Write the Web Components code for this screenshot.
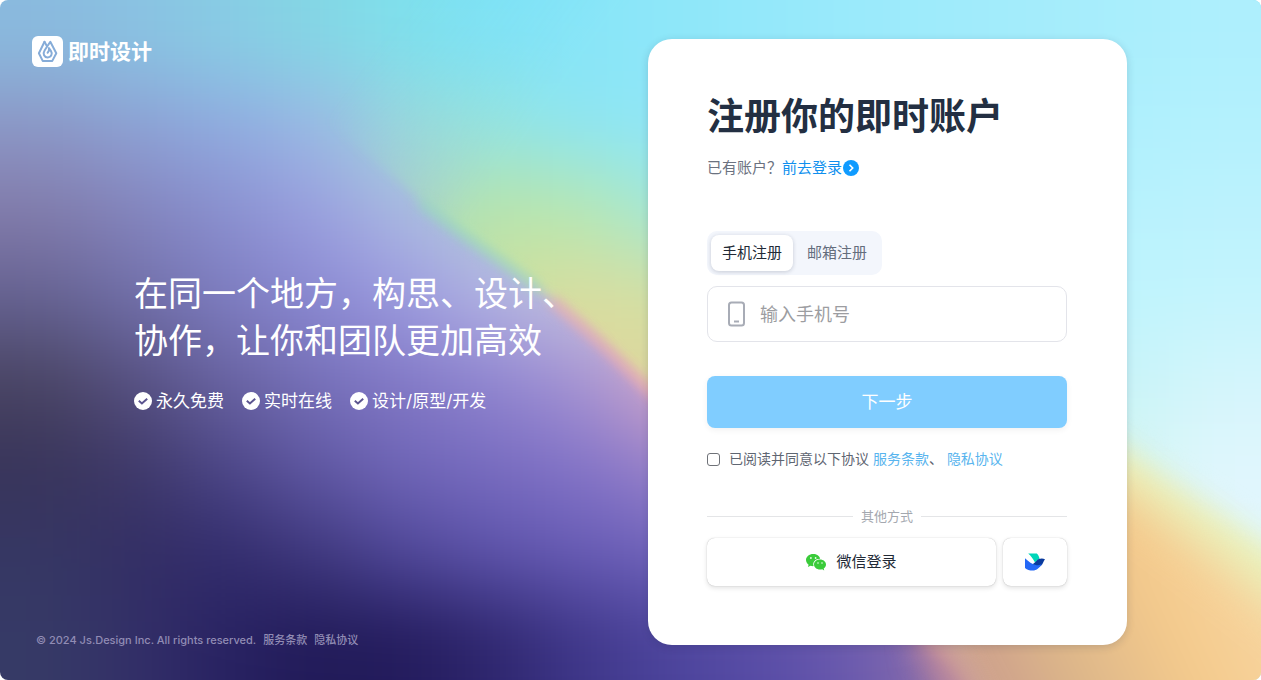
<!DOCTYPE html>
<html lang="zh-CN">
<head>
<meta charset="utf-8">
<meta name="viewport" content="width=device-width, initial-scale=1">
<title>注册 - 即时设计</title>
<style>
  body {
    margin: 0;
    background: #fff;
    font-family: Inter, "Noto Sans CJK SC", sans-serif;
    color: #1f2a3c;
  }
</style>
</head>
<body>
<register-page></register-page>

<template id="page-tpl">
  <style>
    :host {
      display: block;
      position: relative;
      min-height: 100vh;
      border-radius: 8px;
      overflow: hidden;
    }
    color-backdrop { position: absolute; inset: 0; }
    .layout {
      position: relative;
      box-sizing: border-box;
      min-height: 100vh;
      padding: 36px 134px 32px 0;
      display: grid;
      grid-template-columns: minmax(0, 1fr) 479px;
    }
    .intro { display: flex; flex-direction: column; justify-content: space-between; }
    brand-logo { margin-left: 32px; }
    hero-copy { margin: 0 0 16px 134px; }
    site-footer { margin-left: 36px; }
    register-card { margin: 3px 0; }
  </style>
  <color-backdrop></color-backdrop>
  <div class="layout">
    <div class="intro">
      <brand-logo>即时设计</brand-logo>
      <hero-copy>
        <span slot="title">在同一个地方，构思、设计、<br>协作，让你和团队更加高效</span>
        <feature-item>永久免费</feature-item>
        <feature-item>实时在线</feature-item>
        <feature-item>设计/原型/开发</feature-item>
      </hero-copy>
      <site-footer></site-footer>
    </div>
    <register-card></register-card>
  </div>
</template>

<template id="brand-tpl">
  <style>
    :host { display: flex; align-items: center; gap: 5px; height: 31px; color: #fff; font-size: 21px; line-height: 31px; font-weight: 700; }
    svg { display: block; }
  </style>
  <svg width="31" height="31" viewBox="0 0 31 31" aria-hidden="true">
    <rect width="31" height="31" rx="6" fill="#fff"/>
    <g fill="none" stroke="#86acd8" stroke-width="2" stroke-linejoin="round" stroke-linecap="round">
      <path d="M12.500 5.800 6.900 17.200l3.800 7.700h9.600l4-7.700L18.300 5.800l-5.600 8.400c-2.400 3.800-.3 7.200 3 7.200 3.600 0 5-3.800 3.300-6.300l-2.100-3c.7 2.500-.2 3.600-1.300 4.700"/>
      <path d="m12.500 5.800 2.200 4"/>
    </g>
  </svg>
  <slot></slot>
</template>

<template id="hero-tpl">
  <style>
    :host { display: block; color: #fff; }
    h1 { margin: 0; font-size: 34px; line-height: 47px; font-weight: 400; white-space: nowrap; }
    .features { display: flex; gap: 18px; margin-top: 25px; }
  </style>
  <h1><slot name="title"></slot></h1>
  <div class="features"><slot></slot></div>
</template>

<template id="feature-tpl">
  <style>
    :host { display: flex; align-items: center; gap: 4px; font-size: 17px; line-height: 24px; white-space: nowrap; }
    svg { display: block; }
  </style>
  <svg width="18" height="18" viewBox="0 0 18 18" aria-hidden="true">
    <circle cx="9" cy="9" r="9" fill="#fff"/>
    <path d="m4.800 8.800 3.100 2.700 5.300-4.800" fill="none" stroke="#5c5590" stroke-width="2"/>
  </svg>
  <span><slot></slot></span>
</template>

<template id="footer-tpl">
  <style>
    :host { display: flex; gap: 7px; font-size: 11px; line-height: 16px; font-weight: 500; color: #918cb4; white-space: nowrap; }
    a { color: inherit; text-decoration: none; }
  </style>
  <span>© 2024 Js.Design Inc. All rights reserved.</span>
  <a href="#terms">服务条款</a>
  <a href="#privacy">隐私协议</a>
</template>

<template id="card-tpl">
  <style>
    :host {
      display: block;
      box-sizing: border-box;
      padding: 54px 60px 59px 59px;
      border-radius: 24px;
      background: #fff;
      box-shadow: 0 2px 8px rgba(20, 30, 60, .16);
    }
    h2 { margin: 0; font-size: 37px; line-height: 48px; font-weight: 700; color: #232f42; }
    .login { margin: 16px 0 52px; display: flex; align-items: center; font-size: 15px; line-height: 22px; color: #6b7280; }
    a { text-decoration: none; }
    .login a { display: flex; align-items: center; color: #0f8fee; }
    phone-field { margin-top: 11px; }
    .next {
      display: block; width: 100%; height: 52px; margin: 34px 0 21px; padding: 0;
      border: 0; border-radius: 8px; background: #80cdff; color: #fff;
      font: 400 17px/24px Inter, "Noto Sans CJK SC", sans-serif;
      box-shadow: 0 2px 6px rgba(0, 0, 0, .06);
    }
    .agree { display: flex; align-items: center; font-size: 14px; line-height: 20px; color: #5f6672; }
    .agree input {
      appearance: none; box-sizing: border-box; width: 13px; height: 13px; margin: 0 9px 0 0;
      border: 1px solid #6f7278; border-radius: 3px; background: #fff;
    }
    .agree input:checked { background: #0f9bff; }
    .agree a { color: #58b4ee; }
    .or { display: flex; align-items: center; gap: 8px; margin: 37px 0 12px; font-size: 13px; line-height: 20px; color: #a4a8af; }
    .or::before, .or::after { content: ""; flex: 1; height: 1px; background: #e4e5e7; }
    .social { display: grid; grid-template-columns: 1fr 64px; gap: 7px; }
  </style>
  <h2>注册你的即时账户</h2>
  <div class="login"><span>已有账户？</span><a href="#login">前去登录
    <svg width="18" height="18" viewBox="0 0 18 18" aria-hidden="true"><circle cx="9" cy="9" r="8" fill="#0f9bff"/><path d="m7.500 5.800 3.200 3.200-3.200 3.200" fill="none" stroke="#fff" stroke-width="1.600"/></svg></a></div>
  <mode-tabs></mode-tabs>
  <phone-field></phone-field>
  <button class="next" type="button">下一步</button>
  <div class="agree">
    <input id="agree" type="checkbox">
    <span><label for="agree">已阅读并同意以下协议</label> <a href="#terms">服务条款</a>、 <a href="#privacy">隐私协议</a></span>
  </div>
  <div class="or">其他方式</div>
  <div class="social">
    <social-button>
      <svg slot="icon" width="20" height="18" viewBox="0 0 20 18" aria-hidden="true">
        <g fill="#3acb3a">
          <path d="M7.200 1C3.200 1 0 3.700 0 7.100c0 1.900 1 3.500 2.600 4.700l-.7 2.200 2.600-1.300c1 .3 2 .5 3.100.4-1.400-4.200 2-7.500 6.600-7.300C13.600 2.900 10.600 1 7.200 1z"/>
          <path d="M14 6.600c-3.400 0-6 2.200-6 5s2.600 5 6 5c.8 0 1.500-.1 2.200-.3l2 1.100-.5-1.800c1.400-.9 2.300-2.300 2.300-4 0-2.800-2.700-5-6-5z"/>
        </g>
        <g fill="#e9ffe9"><circle cx="4.900" cy="5" r=".9"/><circle cx="9.600" cy="5" r=".9"/><circle cx="12" cy="10" r=".8"/><circle cx="16" cy="10" r=".8"/></g>
      </svg>微信登录</social-button>
    <social-button label="飞书登录">
      <svg slot="icon" width="20" height="18" viewBox="0 0 20 18" aria-hidden="true">
        <path d="M3.200 .6h8.600c1.400 1.200 2.300 3 2.800 5.300-1.900.6-3.300 2-4.600 3.600C8.200 6 6.200 3.400 3.200 .6z" fill="#00d6b9"/>
        <path d="M20 6.300c-3-1.400-6.200-.8-8.700 1.600-1.600 1.700-3 3.200-5 3.800 3.200 1.900 7 3.100 10 .8 1.600-1.300 2.200-4.500 3.700-6.200z" fill="#0a3a9c"/>
        <path d="M0 5.200c3.300 3.300 7.300 6.100 11.700 7 2.400.4 4-.2 5.300-1.600-2 4.300-5.400 7-9.400 7-3 0-5.600-.8-7.300-2.300-.3-.3-.3-.4-.3-.8z" fill="#2468f6"/>
      </svg></social-button>
  </div>
</template>

<template id="tabs-tpl">
  <style>
    :host { display: block; }
    .track { display: inline-flex; gap: 3px; padding: 4px; border-radius: 10px; background: #f3f6fc; vertical-align: top; }
    button {
      width: 82px; height: 36px; padding: 0; border: 0; border-radius: 8px; background: none; color: #646d7c;
      font: 400 15px/22px Inter, "Noto Sans CJK SC", sans-serif;
    }
    button[aria-selected="true"] { background: #fff; color: #222a36; box-shadow: 0 1px 4px rgba(20, 30, 60, .2); }
  </style>
  <div class="track" role="tablist">
    <button type="button" role="tab" aria-selected="true">手机注册</button>
    <button type="button" role="tab" aria-selected="false">邮箱注册</button>
  </div>
</template>

<template id="phone-tpl">
  <style>
    :host { display: block; }
    .box { display: flex; align-items: center; gap: 14px; height: 54px; padding: 0 20px; border: 1px solid #e3e4ea; border-radius: 10px; background: #fff; }
    label, svg { display: block; }
    input {
      flex: 1; min-width: 0; height: 40px; padding: 0; border: 0; outline: 0; background: none; color: #222a36;
      font: 400 18px/26px Inter, "Noto Sans CJK SC", sans-serif;
    }
    input::placeholder { color: #9c9da1; opacity: 1; }
  </style>
  <div class="box">
    <label for="phone" aria-label="手机号">
      <svg width="18" height="26" viewBox="0 0 18 26" fill="none" stroke="#a8acb6" stroke-width="2" aria-hidden="true"><rect x="1" y="1.500" width="15" height="23" rx="2.500"/><path d="M6 20.500h5"/></svg>
    </label>
    <input id="phone" type="tel" placeholder="输入手机号">
  </div>
</template>

<template id="social-tpl">
  <style>
    :host { display: block; }
    button {
      display: flex; align-items: center; justify-content: center; gap: 10px;
      box-sizing: border-box; width: 100%; height: 48px; padding: 0;
      border: 0; border-radius: 8px; background: #fff; color: #222a36;
      font: 400 15px/22px Inter, "Noto Sans CJK SC", sans-serif;
      box-shadow: 0 0 1px rgba(0, 0, 0, .3), 0 2px 5px rgba(0, 0, 0, .12);
    }
  </style>
  <button type="button"><slot name="icon"></slot><slot></slot></button>
</template>

<script>
  const stamp = (el, id) => {
    const root = el.attachShadow({ mode: "open" });
    root.append(document.getElementById(id).content.cloneNode(true));
    return root;
  };

  /* Colour fields, one entry per 90 x 85 cell; a row's last colour runs on to the right. */
  const DUSK = [
    "8abade 8ac2e2 88cce4 84d6e4 7fe0ec 7fe2f4",
    "8c96c6 8ea0d4 90aae0 9cb8e4 9cd4dc 98dcd8",
    "827baa 8383bc 8a8fcf 9a9fdf acb8e2 b0c8d8",
    "656292 706ea8 7d7cc0 8a88d2 9c9be0 b4b4e4 c4c0dc",
    "494462 565080 6862a0 7670b8 8278c6 9085d0 a694d4 d8a8c4",
    "38345a 3e3868 4c4688 6058a4 7066b8 786cc0 8474c8 9a84cc b48ccc",
    "363764 332e64 322c6c 3f387e 50489a 5e54ac 685cb6 7064bc 8070c0 9078c0",
    "363a66 332f68 282262 211a58 231b5c 2e266e 3f378a 4c449c 584ca6 6a5aae 8e70ac c08898"
  ];
  const DAWN = [
    "8abade 8ac2e2 86cee4 82dae4 7ae0f2 80e3f8 88e5f8 8ee7f9 94e8fa 9aeafb 9febfb a4ecfb a9eefc aeeffd",
    "8c96c4 8c9cd0 8fa5dc 98d0dc 98e0d4 94e4e0 8ee5f2 8fe7f8 96e9fa 9ceafb a2ecfb a8eefc aff0fd b4f1fd",
    "8c96c4 8c9cd0 8fa5dc a0c8d0 a8d8bc bae4a8 b8e8b0 a0e8dc 9ceafa a0ecfb a8eefc b0f0fd b8f2fd bcf2fd",
    "a0c8d0 a0c8d0 a0c8d0 a0c8d0 a8dcb8 cce0a0 dcdc9e d4e0a0 c0e8c0 b0ecf0 b4f0fc b8f2fd c0f4fd c4f4fd",
    "c8d0b0 c8d0b0 c8d0b0 c8d0b0 c8d0b0 d4d8a0 dcd69c dcd8a0 d8e0a8 d0e8c0 c8f0e0 c4f4f4 c8f4f8 d4f5fb",
    "dcc0a0 dcc0a0 dcc0a0 dcc0a0 dcc0a0 dcc0a0 dcc0a0 e8c0a0 e8c8a0 e8d0a0 e0e0b0 d4f2e0 d4f6f2 e0f6fd",
    "d0a098 d0a098 d0a098 d0a098 d0a098 d0a098 d0a098 d0a098 dcb098 e8c0a0 ecd0a0 e8e8c0 dff6f0 e2f7fc",
    "c89890 c89890 c89890 c89890 c89890 c89890 c89890 c89890 c89890 c89890 c89890 dcb490 e8e8c0 e4f6f0"
  ];
  const field = rows => rows.map((row, r) => {
    const colours = row.split(" ");
    let out = "";
    for (let c = -1; c < 15; c++) {
      const fill = colours[Math.max(0, Math.min(c, colours.length - 1))];
      const left = c < 0 ? -200 : c * 90;
      const right = c === 14 ? 1480 : c * 90 + 91;
      const top = r === 0 ? -140 : r * 85;
      const bottom = r === 7 ? 820 : r * 85 + 86;
      out += `<rect x="${left}" y="${top}" width="${right - left}" height="${bottom - top}" fill="#${fill}"/>`;
    }
    return out;
  }).join("");

  customElements.define("color-backdrop", class extends HTMLElement {
    constructor() {
      super();
      this.attachShadow({ mode: "open" }).innerHTML = `
        <style>:host { display: block; } svg { display: block; width: 100%; height: 100%; }</style>
        <svg viewBox="0 0 1261 680" preserveAspectRatio="none" aria-hidden="true">
          <defs>
            <filter id="wide" filterUnits="userSpaceOnUse" x="-150" y="-150" width="1600" height="1000" color-interpolation-filters="sRGB"><feGaussianBlur stdDeviation="40"/></filter>
            <filter id="mid" filterUnits="userSpaceOnUse" x="-150" y="-150" width="1600" height="1000" color-interpolation-filters="sRGB"><feGaussianBlur stdDeviation="14"/></filter>
            <filter id="soft" filterUnits="userSpaceOnUse" x="-150" y="-150" width="1600" height="1000" color-interpolation-filters="sRGB"><feGaussianBlur stdDeviation="22"/></filter>
            <filter id="fine" filterUnits="userSpaceOnUse" x="-150" y="-150" width="1600" height="1000" color-interpolation-filters="sRGB"><feGaussianBlur stdDeviation="6"/></filter>
            <linearGradient id="reach" gradientUnits="userSpaceOnUse" x1="340" y1="100" x2="480" y2="200"><stop offset="0" stop-color="#000"/><stop offset="1" stop-color="#fff"/></linearGradient>
            <linearGradient id="peach" gradientUnits="userSpaceOnUse" x1="960" y1="690" x2="1240" y2="560"><stop offset="0" stop-color="#c8988c"/><stop offset=".35" stop-color="#dcb68a"/><stop offset=".7" stop-color="#f4ca8c"/><stop offset="1" stop-color="#f7d49e"/></linearGradient>
            <mask id="edge" maskUnits="userSpaceOnUse" x="0" y="0" width="1261" height="680">
              <path filter="url(#fine)" fill="url(#reach)" d="M200-60 290 90 Q350 140 400 182 C445 226 500 256 550 298 S610 350 655 396 L800 520 Q900 620 985 700 L1500 700V-60Z"/>
            </mask>
          </defs>
          <g filter="url(#wide)">${field(DUSK)}</g>
          <g mask="url(#edge)"><g filter="url(#wide)">${field(DAWN)}</g></g>
          <path d="M420 202C460 236 500 258 540 290" fill="none" stroke="#8fe0b4" stroke-width="10" opacity=".5" filter="url(#fine)"/>
          <path d="M552 300C600 342 620 362 665 406" fill="none" stroke="#f0a4b4" stroke-width="11" opacity=".65" filter="url(#fine)"/>
          <path d="M1050 400 1127 450 Q1194 498 1300 566 V760 H1010 L900 560Z" fill="#eaf2bc" filter="url(#mid)"/>
          <path d="M1040 430 1127 488 Q1200 540 1320 640 V790 H1010 L930 640Z" fill="url(#peach)" filter="url(#soft)"/>
          <path d="M915 620 968 705" fill="none" stroke="#bc80a0" stroke-width="26" opacity=".7" filter="url(#mid)"/>
        </svg>`;
    }
  });

  for (const [name, id] of [
    ["brand-logo", "brand-tpl"], ["feature-item", "feature-tpl"], ["hero-copy", "hero-tpl"],
    ["site-footer", "footer-tpl"], ["phone-field", "phone-tpl"], ["register-card", "card-tpl"]
  ]) {
    customElements.define(name, class extends HTMLElement {
      constructor() { super(); stamp(this, id); }
    });
  }

  customElements.define("mode-tabs", class extends HTMLElement {
    constructor() {
      super();
      const tabs = stamp(this, "tabs-tpl").querySelectorAll("button");
      tabs.forEach(tab => tab.addEventListener("click", () =>
        tabs.forEach(t => t.setAttribute("aria-selected", String(t === tab)))));
    }
  });

  customElements.define("social-button", class extends HTMLElement {
    constructor() { super(); stamp(this, "social-tpl"); }
    connectedCallback() {
      const label = this.getAttribute("label");
      if (label) this.shadowRoot.querySelector("button").setAttribute("aria-label", label);
    }
  });

  customElements.define("register-page", class extends HTMLElement {
    constructor() { super(); stamp(this, "page-tpl"); }
  });
</script>
</body>
</html>
